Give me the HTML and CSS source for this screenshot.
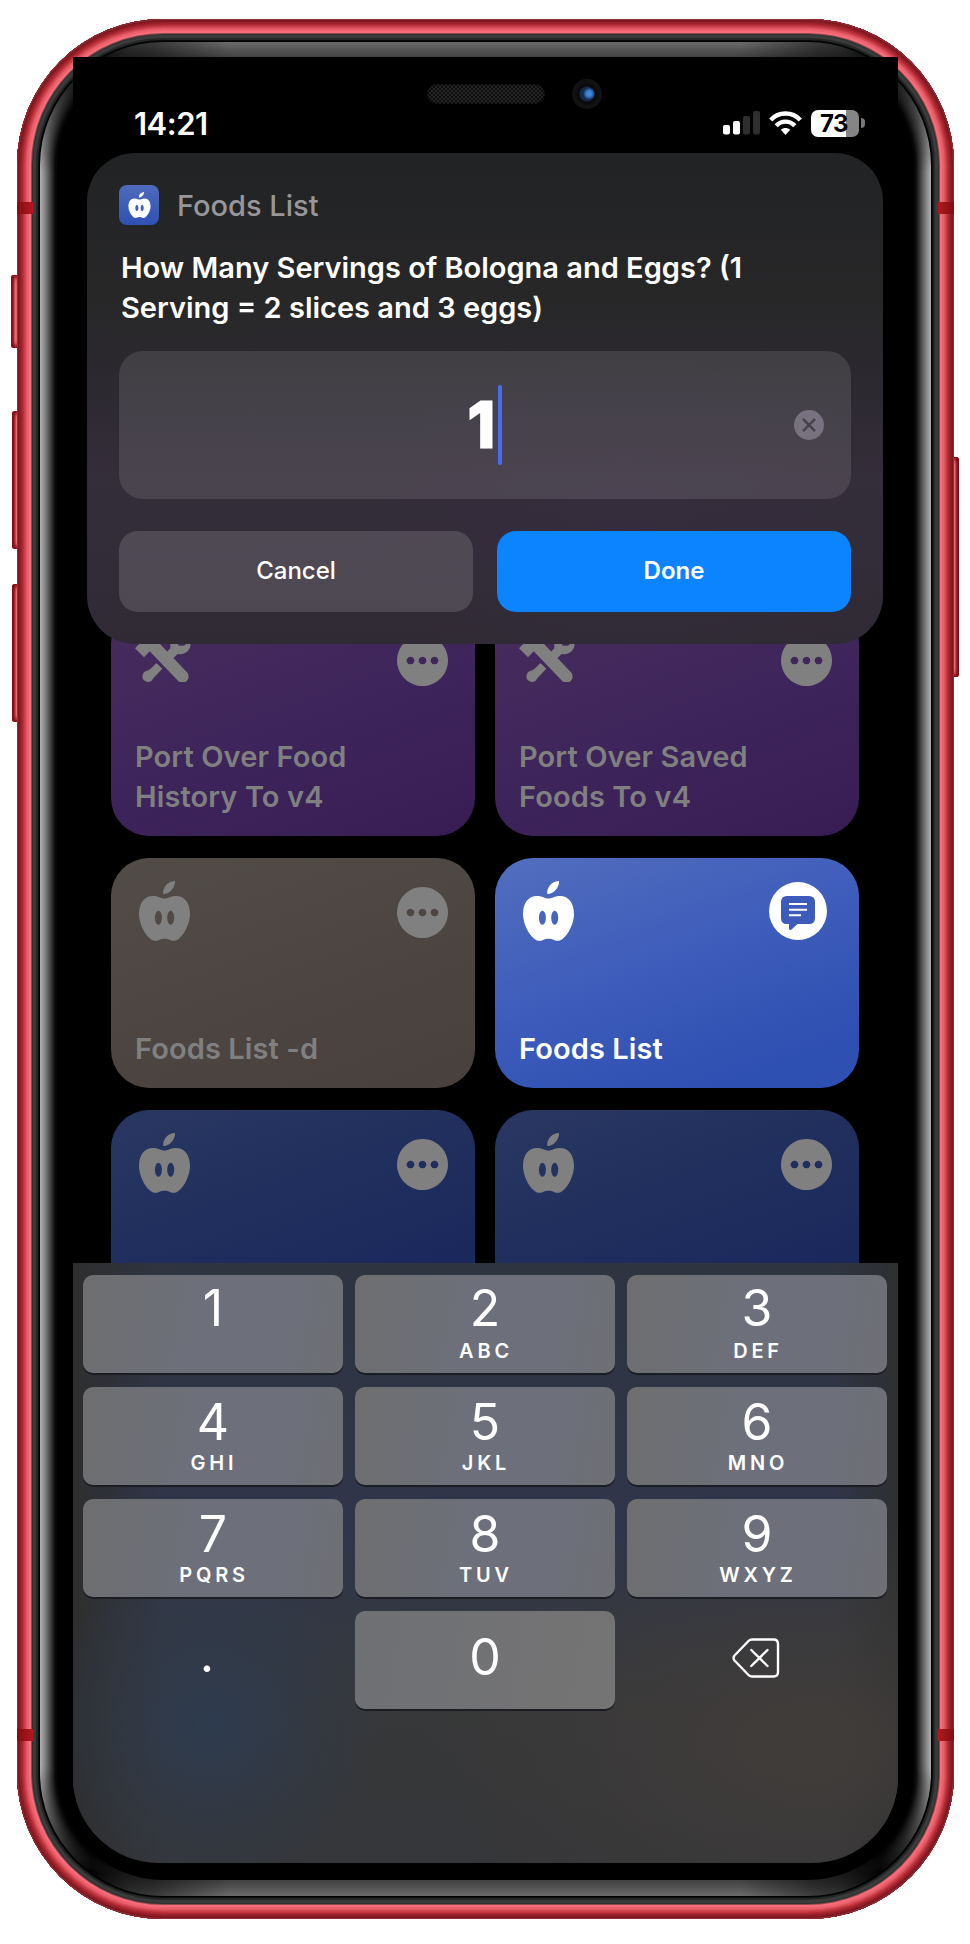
FILE: index.html
```html
<!DOCTYPE html>
<html lang="en">
<head>
<meta charset="utf-8">
<title>Foods List</title>
<link rel="stylesheet" href="styles.css">
</head>
<body>
<svg class="defs" aria-hidden="true">
  <symbol id="apple" viewBox="0 0 51 60"><path fill="currentColor" fill-rule="evenodd" d="M25.5 17.5C21 17.5 20 15 14 15C5 15 0 22.500 0 33C0 43 6 53.500 11 57.500C13.500 60 17 60.500 20 59C23 57.200 28 57.200 31 59C34 60.500 37.500 60 40 57.500C45 53.500 51 43 51 33C51 22.500 46 15 37 15C31 15 30 17.500 25.500 17.500ZM19.400 29.700a3.500 7 0 1 0 .01 0ZM31.700 29.700a3.500 7 0 1 0 .01 0ZM24.300 13C23.500 6 29 .2 36 0C36.500 6 31 13 24.300 13Z"/></symbol>
  <symbol id="more" viewBox="0 0 51 51"><path fill="currentColor" fill-rule="evenodd" d="M25.500 0a25.500 25.500 0 1 0 .01 0ZM13.500 21.700a3.800 3.800 0 1 1-.01 0ZM25.500 21.700a3.800 3.800 0 1 1-.01 0ZM37.500 21.700a3.800 3.800 0 1 1-.01 0Z"/></symbol>
  <symbol id="tools" viewBox="108 30 170 160"><path fill="currentColor" d="M108 88L150 45L176 38L170 60L180 72L264 160A16.500 16.500 0 0 1 237 185L152 97L135 115ZM204 98L214 88V72C214 50 228 42 244 44L238 60V80H255L275 64C278 92 262 109 236 105L223 118ZM172 132L190 149L163 178A17 17 0 1 1 139 157C151 155 160 144 172 132Z"/></symbol>
</svg>
<main class="phone">
  <i class="side-button mute"></i><i class="side-button vol-up"></i><i class="side-button vol-down"></i><i class="side-button power"></i>
  <div class="shell"></div>
  <i class="band tl"></i><i class="band tr"></i><i class="band bl"></i><i class="band br"></i>
  <div class="bevel bevel-sides"></div>
  <div class="bevel bevel-ends"></div>
  <div class="speaker"></div>
  <div class="camera"></div>

  <div class="screen">
    <header class="status">
      <span class="clock">14:21</span>
      <span class="indicators">
        <svg class="signal" width="38" height="24" viewBox="0 0 38 24"><g fill="#fff"><rect y="14" width="7" height="9.500" rx="2"/><rect x="10" y="10" width="7" height="13.500" rx="2"/></g><g fill="#2f2f2f"><rect x="20" y="5" width="7" height="18.500" rx="2"/><rect x="30" width="7" height="23.500" rx="2"/></g></svg>
        <svg class="wifi" width="33" height="25" viewBox="0 0 33 25"><g fill="none" stroke="#fff" stroke-width="4.400"><path d="M1.700 9C9.500 .4 23.500 .4 31.300 9"/><path d="M7.200 14.700C12.200 9.300 20.800 9.300 25.800 14.700"/></g><path fill="#fff" d="M11.800 18.700C14.500 16.300 18.500 16.300 21.200 18.700L16.500 24Z"/></svg>
        <span class="battery">73</span><i class="battery-tip"></i>
      </span>
    </header>

    <section class="cards">
      <article class="card purple"><div class="card-top"><svg class="tools"><use href="#tools"/></svg><svg class="more"><use href="#more"/></svg></div><h2>Port Over Food<br>History To v4</h2></article>
      <article class="card purple"><div class="card-top"><svg class="tools"><use href="#tools"/></svg><svg class="more"><use href="#more"/></svg></div><h2>Port Over Saved<br>Foods To v4</h2></article>
      <article class="card brown"><div class="card-top"><svg class="apple"><use href="#apple"/></svg><svg class="more"><use href="#more"/></svg></div><h2>Foods List -d</h2></article>
      <article class="card active"><div class="card-top"><svg class="apple"><use href="#apple"/></svg>
        <svg class="chat" viewBox="0 0 58 58"><circle cx="29" cy="29" r="29" fill="#fff"/><path fill="#3c5bbb" d="M18 14H40Q46 14 46 20V36Q46 42 40 42H28.500L22.500 47.500Q20 49 20 46.500V42H18Q12 42 12 36V20Q12 14 18 14Z"/><path d="M20 22H38M20 27.700H38M20 33.300H32" stroke="#fff" stroke-width="2"/></svg></div><h2>Foods List</h2></article>
      <article class="card navy"><div class="card-top"><svg class="apple"><use href="#apple"/></svg><svg class="more"><use href="#more"/></svg></div></article>
      <article class="card navy"><div class="card-top"><svg class="apple"><use href="#apple"/></svg><svg class="more"><use href="#more"/></svg></div></article>
    </section>

    <section class="dialog">
      <div class="app"><span class="app-icon"><svg><use href="#apple"/></svg></span><span class="app-name">Foods List</span></div>
      <p class="prompt"><span class="l1">How Many Servings of Bologna and Eggs? (1</span><br><span class="l2">Serving = 2 slices and 3 eggs)</span></p>
      <div class="field"><span class="value">1</span><i class="caret"></i>
        <svg class="clear" width="30" height="30" viewBox="0 0 30 30"><circle cx="15" cy="15" r="15" fill="#77727e"/><path d="M9.700 9.700L20.300 20.300M20.300 9.700L9.700 20.300" stroke="#46404e" stroke-width="2.500" stroke-linecap="round"/></svg>
      </div>
      <div class="actions"><span class="btn cancel">Cancel</span><span class="btn done">Done</span></div>
    </section>

    <section class="keyboard">
      <div class="key first"><b>1</b></div><div class="key first"><b>2</b><small>ABC</small></div><div class="key first"><b>3</b><small>DEF</small></div>
      <div class="key"><b>4</b><small>GHI</small></div><div class="key"><b>5</b><small>JKL</small></div><div class="key"><b>6</b><small>MNO</small></div>
      <div class="key"><b>7</b><small>PQRS</small></div><div class="key"><b>8</b><small>TUV</small></div><div class="key"><b>9</b><small>WXYZ</small></div>
      <div class="key plain point">.</div><div class="key zero"><b>0</b></div>
      <div class="key plain"><svg width="48" height="40" viewBox="0 0 48 40" fill="none" stroke="#fff" stroke-width="2.400" stroke-linecap="round" stroke-linejoin="round"><path d="M20 1.500H41.500Q46 1.500 46 6V34Q46 38.500 41.500 38.500H20Q18 38.500 16.500 37L2.500 22.500Q.5 20 2.500 17.500L16.500 3Q18 1.500 20 1.500Z"/><path d="M19.300 12L35.500 28M35.500 12L19.300 28"/></svg></div>
    </section>
  </div>
</main>
</body>
</html>
```

FILE: styles.css
```css
* { box-sizing: border-box; }
body { margin: 0; padding: 19px 0 0 17px; width: 970px; height: 1944px; overflow: hidden; background: #fff; font-family: Inter, "Liberation Sans", sans-serif; color: #fff; }
.defs { position: absolute; width: 0; height: 0; }
svg { display: block; flex: none; }

/* device */
.phone { position: relative; width: 937px; height: 1900px; padding: 38px 56px; }
.shell { position: absolute; inset: 0; border-radius: 146px; background: #000;
  box-shadow: inset 0 0 0 1px #8d3039, inset 0 0 0 2px #7c171e, inset 0 0 0 3px #861b23, inset 0 0 0 4px #921e27, inset 0 0 0 5px #9f232c, inset 0 0 0 6px #ad2932, inset 0 0 0 7px #ba323b, inset 0 0 0 8px #c63d47, inset 0 0 0 9px #d34a54, inset 0 0 0 10px #df5661, inset 0 0 0 12px #ec616d, inset 0 0 0 14px #f86d79, inset 0 0 0 15px #8c4a4e, inset 0 0 0 16px #303030, inset 0 0 0 19px #3a3b3b, inset 0 0 0 21px #252727, inset 0 0 0 22px #080b0c; }
.bevel { position: absolute; inset: 23px; border-radius: 123px; }
.bevel-sides { box-shadow: inset 0 0 0 1px #a9a9a9, inset 0 0 0 2px #a4a4a4, inset 0 0 0 3px #9b9b9b, inset 0 0 0 4px #919191, inset 0 0 0 5px #878787, inset 0 0 0 6px #7c7c7c, inset 0 0 0 7px #717171, inset 0 0 0 8px #666, inset 0 0 0 9px #5a5a5a, inset 0 0 0 10px #4e4e4e, inset 0 0 0 11px #424242, inset 0 0 0 12px #363636, inset 0 0 0 13px #2a2a2a, inset 0 0 0 14px #1e1e1e, inset 0 0 0 15px #131313, inset 0 0 0 17px #080808;
  -webkit-mask-image: linear-gradient(transparent 22px, #000 130px, #000 calc(100% - 130px), transparent calc(100% - 22px)); mask-image: linear-gradient(transparent 22px, #000 130px, #000 calc(100% - 130px), transparent calc(100% - 22px)); }
.bevel-ends { box-shadow: inset 0 0 0 2px #686868, inset 0 0 0 4px #636363, inset 0 0 0 6px #5d5d5d, inset 0 0 0 8px #575757, inset 0 0 0 10px #515151, inset 0 0 0 12px #4c4c4c, inset 0 0 0 14px #474747, inset 0 0 0 16px #434343;
  -webkit-mask-image: linear-gradient(90deg, transparent 50px, #0006 90px, #000 190px, #000 calc(100% - 190px), #0006 calc(100% - 90px), transparent calc(100% - 50px)); mask-image: linear-gradient(90deg, transparent 50px, #0006 90px, #000 190px, #000 calc(100% - 190px), #0006 calc(100% - 90px), transparent calc(100% - 50px)); }
.band { position: absolute; width: 16px; height: 12px; background: linear-gradient(90deg, #820d12, #b3181d); }
.tl, .bl { left: 0; }
.tr, .br { right: 0; transform: scaleX(-1); }
.tl, .tr { top: 183px; }
.bl, .br { bottom: 178px; }
.side-button { position: absolute; left: -5px; width: 9px; border-radius: 3px 0 0 3px; background: linear-gradient(90deg, #6e0b14, #9c1d27 25%, #e66b74 50%, #d9545e 70%, #8f1620); box-shadow: inset 0 5px 4px -2px #8a0a14, inset 0 -5px 4px -2px #8a0a14; }
.mute { top: 256px; height: 73px; left: -6px; }
.vol-up { top: 392px; height: 138px; }
.vol-down { top: 565px; height: 138px; }
.power { top: 438px; height: 220px; left: auto; right: -5px; transform: scaleX(-1); }
.speaker { position: absolute; z-index: 2; left: 410px; top: 65px; width: 118px; height: 20px; border-radius: 10px; background: repeating-conic-gradient(#262626 0 25%, #0d0d0d 0 50%) 0 0 / 4px 4px; box-shadow: inset 0 0 3px #000; }
.camera { position: absolute; z-index: 2; left: 555px; top: 60px; width: 30px; height: 30px; border-radius: 50%; background: radial-gradient(circle at 57% 49%, #3e8ad8 0 2px, #2a66ae 4px, transparent 6px), radial-gradient(circle, #14294c 0 7px, #080808 8px, #111 12px, #181818); }

/* screen */
.screen { position: relative; width: 825px; height: 1806px; overflow: hidden; background: #000; border-radius: 0 0 86px 86px; }
.status { display: flex; justify-content: space-between; align-items: center; height: 50px; margin-top: 41px; padding: 0 33px 0 61px; }
.clock { font-size: 31px; font-weight: 600; letter-spacing: -.5px; }
.indicators { display: flex; align-items: center; }
.wifi { margin: 0 9px 0 8px; }
.battery { width: 48px; height: 27px; border-radius: 7px; background: linear-gradient(90deg, #fff 35px, #858585 35px); color: #000; font-size: 24px; font-weight: 700; line-height: 27px; text-align: center; letter-spacing: -.5px; padding-right: 2px; }
.battery-tip { width: 4px; height: 10px; margin-left: 2px; border-radius: 0 4px 4px 0; background: #777; }

.cards { display: grid; grid-template-columns: 364px 364px; grid-auto-rows: 230px; gap: 22px 20px; margin: 458px 0 0 38px; }
.card { display: flex; flex-direction: column; justify-content: space-between; border-radius: 38px; padding: 23px 27px 19px 24px; color: #808080; }
.card-top { display: flex; justify-content: space-between; align-items: flex-start; }
.card h2 { margin: 0; font-size: 29px; line-height: 40px; font-weight: 600; letter-spacing: .1px; white-space: nowrap; }
.apple { width: 51px; height: 60px; margin-left: 4px; }
.tools { width: 56.700px; height: 53.300px; }
.more { width: 51px; height: 51px; margin-top: 6px; }
.chat { width: 58px; height: 58px; margin: 1px 5px 0 0; }
.purple { background: linear-gradient(160deg, #472d5d, #3c235a 60%, #381d54); }
.brown { background: linear-gradient(160deg, #524c48, #48413e 90%); }
.active { background: linear-gradient(160deg, #526ebf, #3d5bba 48%, #2e50b2 85%); color: #fff; }
.navy { background: linear-gradient(160deg, #293761, #1a285c 75%); }

/* prompt */
.dialog { position: absolute; left: 14px; top: 96px; width: 796px; height: 491px; padding: 32px; border-radius: 48px; background: radial-gradient(ellipse 280px 180px at 68% 78%, #392d4366, transparent), linear-gradient(#222325, #272728 30%, #2c2930 47%, #342d3a 66%, #322c38 82%, #2f2a34); display: flex; flex-direction: column; }
.app { display: flex; align-items: center; gap: 18px; height: 40px; }
.app-icon { width: 40px; height: 40px; border-radius: 8px; background: linear-gradient(#4f6abc, #2f51b3); display: grid; place-items: center; }
.app-icon svg { width: 23px; height: 26px; }
.app-name { font-size: 29px; font-weight: 500; color: #97979a; }
.prompt { margin: 23px 0 0 2px; height: 80px; font-size: 29px; line-height: 40px; font-weight: 600; white-space: nowrap; }
.field { position: relative; display: flex; justify-content: center; align-items: center; height: 148px; margin-top: 23px; border-radius: 24px; background: #ffffff1c; }
.value { font-size: 62px; font-weight: 700; line-height: 80px; -webkit-text-stroke: 3px #fff; stroke-linejoin: round; }
.caret { width: 4px; height: 80px; border-radius: 2px; background: #4a6cf4; margin-left: 3px; }
.clear { position: absolute; right: 27px; top: 59px; }
.actions { display: flex; gap: 24px; margin-top: 32px; }
.btn { flex: 1; height: 81px; border-radius: 19px; font-size: 24px; font-weight: 500; line-height: 80px; text-align: center; }
.cancel { background: #ffffff24; }
.done { background: #0c84ff; font-weight: 600; }

/* keypad */
.keyboard { position: absolute; left: 0; top: 1206px; width: 825px; height: 600px; padding: 12px 11px 0 10px; display: grid; grid-template-columns: repeat(3, 260px); grid-auto-rows: 98px; gap: 14px 12px; align-content: start;
  background: radial-gradient(circle at 137px 460px, #2e3b4f, transparent 170px), radial-gradient(ellipse 400px 240px at 90% 80%, #403c3a, transparent), linear-gradient(90deg, #2e2e2e, transparent 90px, transparent 760px, #2d2f30), linear-gradient(#2f3441, #30354a 45%, #343841 62%, #373839 75%, #353639); }
.key { display: flex; flex-direction: column; align-items: center; border-radius: 10px; background: linear-gradient(100deg, #6e6e6f, #6d707b 45%, #6d6f7a 80%, #6f7074); box-shadow: 0 2px 0 #1c1d22; padding-top: 10px; }
.key.first { padding-top: 8px; }
.key b { font-weight: 400; font-size: 50px; line-height: 50px; }
.key small { font-size: 20px; font-weight: 600; line-height: 24px; letter-spacing: 3.800px; margin-top: 4px; margin-right: -2px; }
.key.first small { margin-top: 6px; }
.key.zero { padding-top: 21px; background: linear-gradient(100deg, #6e7074, #757474); }
.key.plain { background: none; box-shadow: none; padding: 27px 0 0 11px; padding-left: 11px; }
.key.plain svg { margin-left: -14px; }
.key.point { font-size: 50px; line-height: 32px; padding: 27px 12px 0 0; }
```
